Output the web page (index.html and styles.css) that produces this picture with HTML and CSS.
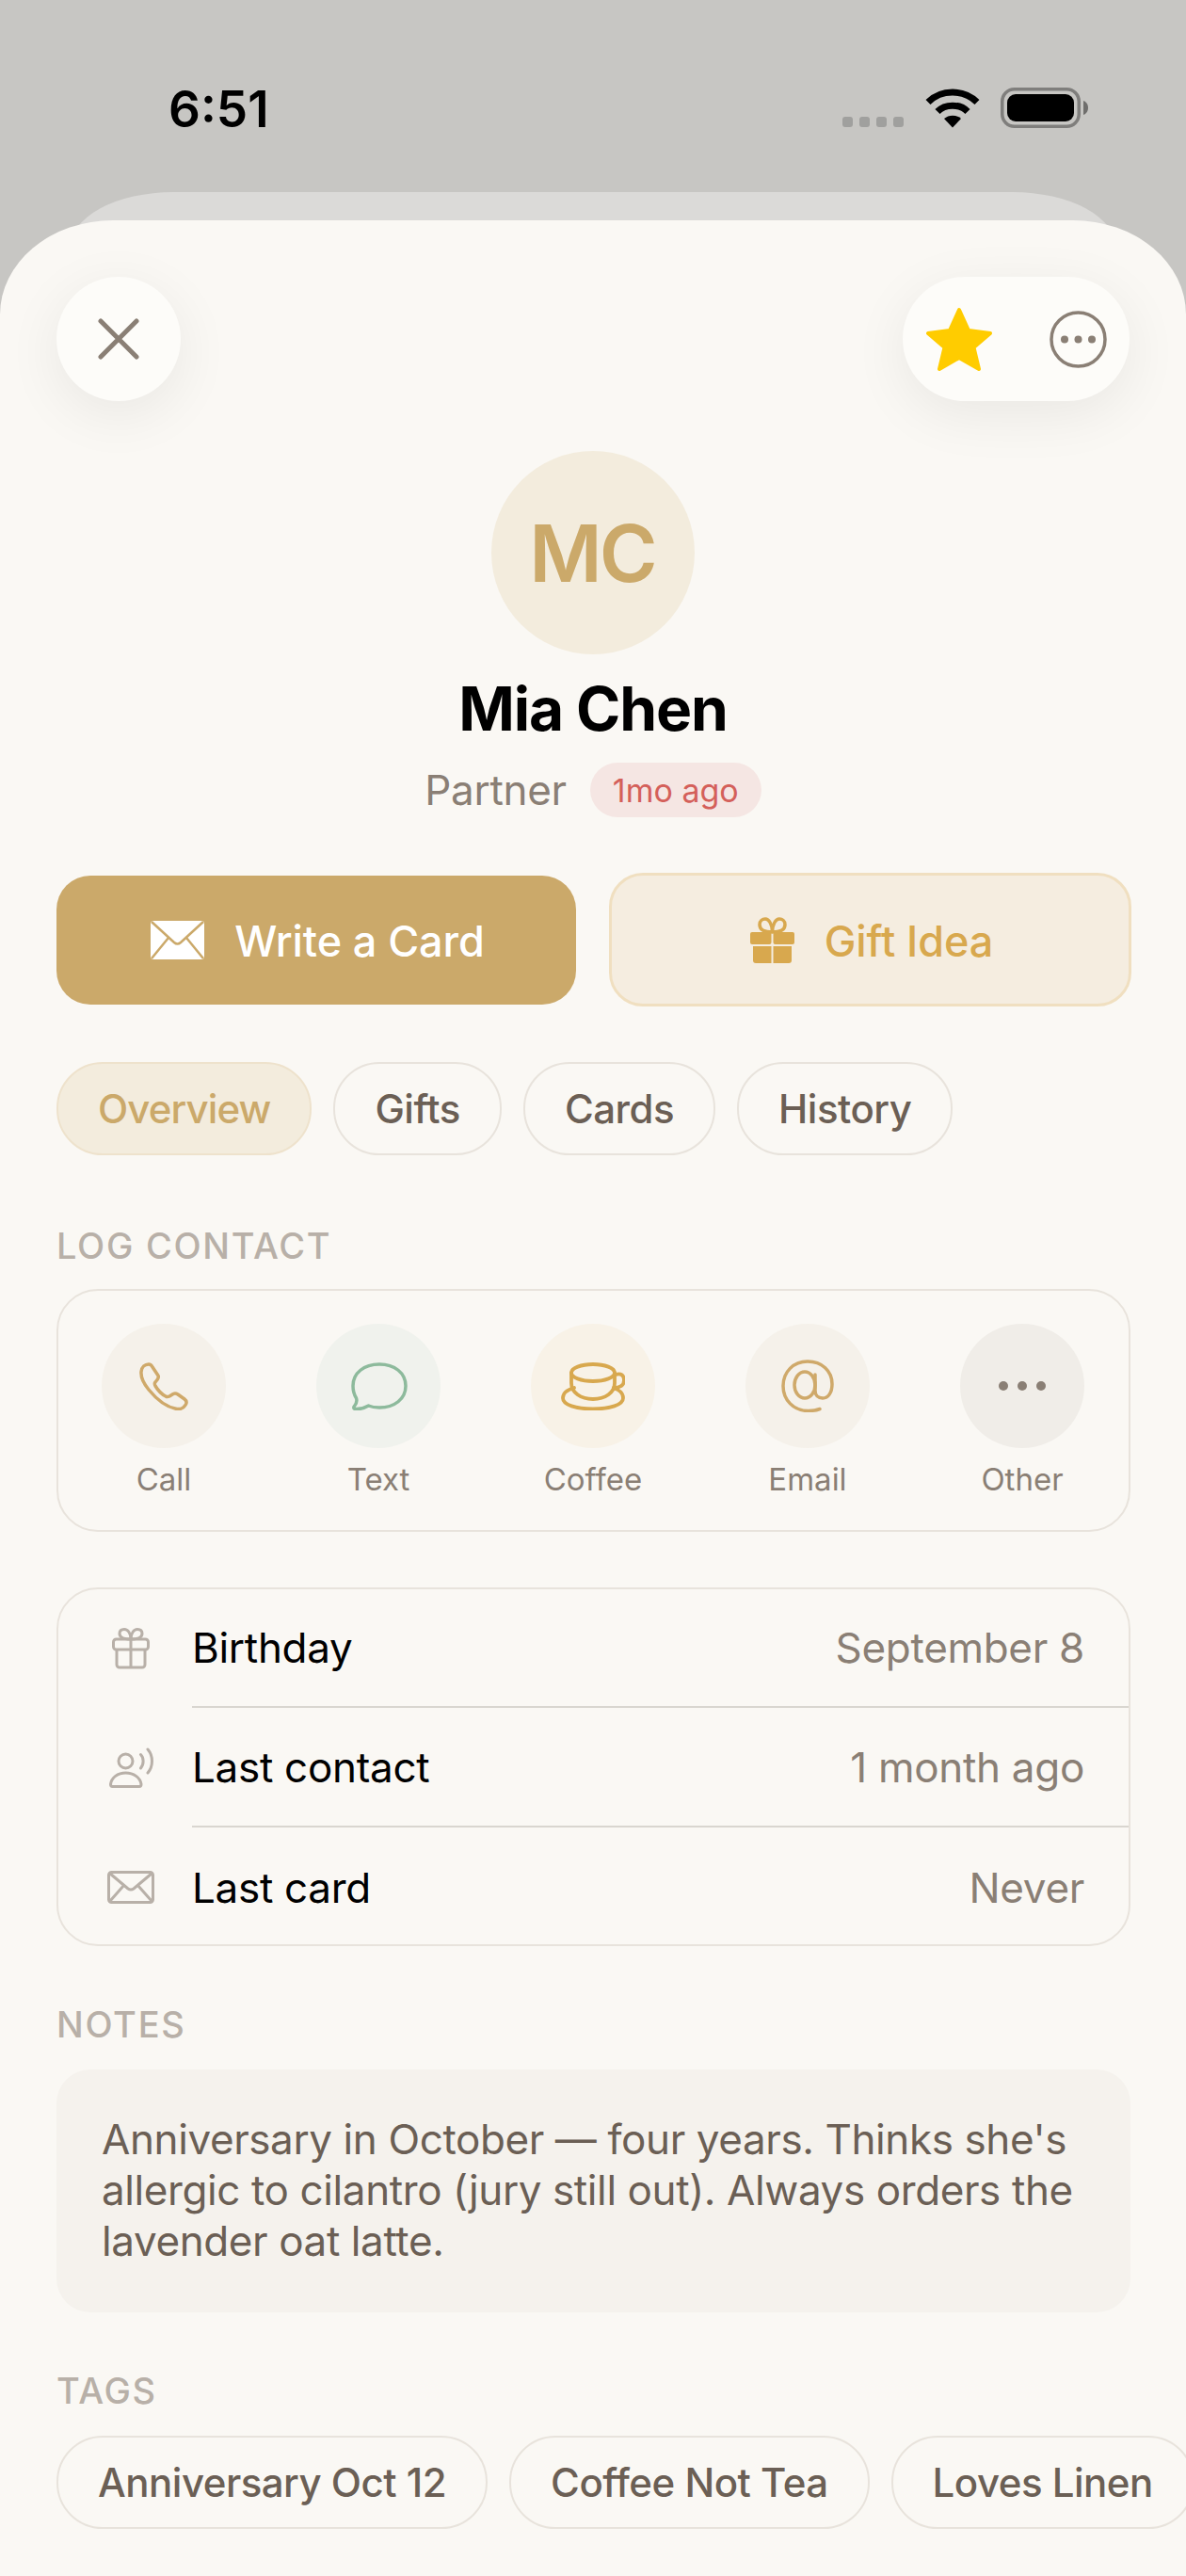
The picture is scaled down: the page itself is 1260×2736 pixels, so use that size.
FILE: index.html
```html
<!DOCTYPE html>
<html lang="en">
<head>
    <meta charset="UTF-8">
    <meta name="viewport" content="width=device-width, initial-scale=1.0">
    <title>Mia Chen</title>
    <link rel="stylesheet" href="styles.css">
</head>
<body>
    <div class="status-bar">
        <div class="time">6:51</div>
        <div class="status-icons">
            <div class="signal"><span></span><span></span><span></span><span></span></div>
            <svg class="wifi" width="58" height="43" viewBox="0 0 58 43">
                <path d="M3 15.500C17 1.500 41 1.500 55 15.500M13 25.500C21 17 37 17 45 25.500" fill="none" stroke="#000" stroke-width="7"/>
                <path d="M20 33C25 28.500 33 28.500 38 33L29 42.500Z" fill="#000"/>
            </svg>
            <svg class="battery" width="93" height="43" viewBox="0 0 93 43">
                <rect x="1.750" y="1.750" width="81.500" height="39.500" rx="13" fill="none" stroke="#7f7e7c" stroke-width="3.500"/>
                <rect x="7" y="7" width="71" height="29" rx="9" fill="#000"/>
                <path d="M88 14C91 15 93 18 93 21.500C93 25 91 28 88 29Z" fill="#6f6e6c"/>
            </svg>
        </div>
    </div>

    <div class="sheet-behind"></div>

    <div class="sheet">
        <div class="top-bar">
            <button class="close-btn">
                <svg width="44" height="44" viewBox="0 0 44 44">
                    <path d="M3 3L41 41M41 3L3 41" fill="none" stroke="#8a7f75" stroke-width="5" stroke-linecap="round"/>
                </svg>
            </button>
            <div class="top-actions">
                <svg width="72" height="69" viewBox="0 0 72 69">
                    <path d="M36 3L46 25L69 28L51.500 43L57 66L36 54L15 66L20.500 43L3 28L26 25Z" fill="#ffcc00" stroke="#ffcc00" stroke-width="4" stroke-linejoin="round"/>
                </svg>
                <svg width="61" height="61" viewBox="0 0 61 61">
                    <circle cx="30.500" cy="30.500" r="28.500" fill="none" stroke="#8a7f75" stroke-width="3.500"/>
                    <circle cx="16" cy="30.500" r="4" fill="#8a7f75"/>
                    <circle cx="30.500" cy="30.500" r="4" fill="#8a7f75"/>
                    <circle cx="45" cy="30.500" r="4" fill="#8a7f75"/>
                </svg>
            </div>
        </div>

        <div class="profile">
            <div class="avatar">MC</div>
            <h1 class="name">Mia Chen</h1>
            <div class="relation">
                <span>Partner</span>
                <span class="overdue">1mo ago</span>
            </div>
        </div>

        <div class="actions">
            <div class="btn btn-primary">
                <svg width="57" height="41" viewBox="0 0 57 41">
                    <rect width="57" height="41" rx="3" fill="#fff"/>
                    <path d="M1 1L25 23Q28.500 26 32 23L56 1M1 40L19 18M56 40L38 18" fill="none" stroke="#cba96a" stroke-width="2.500"/>
                </svg>
                <span>Write a Card</span>
            </div>
            <div class="btn btn-soft">
                <svg width="47" height="49" viewBox="0 0 47 49">
                    <path d="M23.500 16C17 16 10 15 10 8C10 4 13 2 16 2C20 2 23.500 8 23.500 16C23.500 8 27 2 31 2C34 2 37 4 37 8C37 15 30 16 23.500 16Z" fill="none" stroke="#d8a84e" stroke-width="3.500"/>
                    <rect y="16" width="22.500" height="13" rx="2" fill="#d8a84e"/>
                    <rect x="24.500" y="16" width="22.500" height="13" rx="2" fill="#d8a84e"/>
                    <path d="M3 31H22.500V49H6Q3 49 3 46ZM24.500 31H44V46Q44 49 41 49H24.500Z" fill="#d8a84e"/>
                </svg>
                <span>Gift Idea</span>
            </div>
        </div>

        <div class="tabs">
            <div class="tab active">Overview</div>
            <div class="tab">Gifts</div>
            <div class="tab">Cards</div>
            <div class="tab">History</div>
        </div>

        <div class="section-label log-label">LOG CONTACT</div>
        <div class="card log-card">
            <div class="log-item">
                <div class="log-circle call">
                    <svg width="52" height="51" viewBox="0 0 52 51">
                        <path d="M10 2C12 2 13 3 14 5L20 14C21 16 20 17 19 18.500L17 21C16 22 16 23 17 25C20 30 24 34 28 36C29.500 37 31 36.500 32 36L36 33.500C38 32.500 39.500 33 41 34L48 39C50 40.500 50.500 42.500 49.500 44.500C47.500 48 44 50 40 49.500C30 48 19 40 10 29C5 23 1.500 16 2 10C2.500 5 6 2 10 2Z" fill="none" stroke="#cfa96a" stroke-width="3.500" stroke-linejoin="round"/>
                    </svg>
                </div>
                <span>Call</span>
            </div>
            <div class="log-item">
                <div class="log-circle text">
                    <svg width="61" height="51" viewBox="0 0 61 51">
                        <path d="M31 2C47 2 59 11 59 25C59 39 47 48 31 48C27 48 23 47.500 19.500 46C16 48 10 50 5 49.500C3.500 49 3.500 47.500 4.500 46.500C6.500 44 7.500 41 6.500 38C4 34 3 30 3 25C3 11 15 2 31 2Z" fill="none" stroke="#8dba9c" stroke-width="3.500" stroke-linejoin="round"/>
                    </svg>
                </div>
                <span>Text</span>
            </div>
            <div class="log-item">
                <div class="log-circle coffee">
                    <svg width="68" height="51" viewBox="0 0 68 51">
                        <g fill="none" stroke="#d8a84e" stroke-width="3.800" stroke-linecap="round">
                            <ellipse cx="34" cy="11" rx="23" ry="9"/>
                            <path d="M11 11V22C11 32 21 39 34 39C47 39 57 32 57 22V11"/>
                            <path d="M58 13C64 11 67 14 67 19C67 24 63 27 56 27"/>
                            <path d="M14 27C7 29 2 33 2 38C2 45 16 49.500 34 49.500C52 49.500 66 45 66 38C66 33 62 29 56 27.500"/>
                        </g>
                    </svg>
                </div>
                <span>Coffee</span>
            </div>
            <div class="log-item">
                <div class="log-circle email">
                    <svg width="56" height="56" viewBox="0 0 56 56">
                        <g fill="none" stroke="#cfa96a" stroke-width="3.500" stroke-linecap="round">
                            <path d="M41 52.500C37 54 33 54.500 29 54.500C13 54.500 2 43 2 28C2 13 13 2 28 2C43 2 54 12 54 26C54 35 50 41 44 41C39 41 36 38 36 33V16"/>
                            <ellipse cx="25" cy="27" rx="11" ry="14"/>
                        </g>
                    </svg>
                </div>
                <span>Email</span>
            </div>
            <div class="log-item">
                <div class="log-circle other">
                    <svg width="50" height="12" viewBox="0 0 50 12">
                        <circle cx="5" cy="6" r="5" fill="#8a7f75"/>
                        <circle cx="25" cy="6" r="5" fill="#8a7f75"/>
                        <circle cx="45" cy="6" r="5" fill="#8a7f75"/>
                    </svg>
                </div>
                <span>Other</span>
            </div>
        </div>

        <div class="card info-card">
            <div class="info-row">
                <div class="info-icon">
                    <svg width="40" height="44" viewBox="0 0 40 44">
                        <g fill="none" stroke="#b8b0a8" stroke-width="3">
                            <rect x="1.500" y="12" width="37" height="11" rx="3"/>
                            <path d="M5 23V39A3 3 0 0 0 8 42H32A3 3 0 0 0 35 39V23M20 12V42"/>
                            <path d="M20 12C14 12 8 11 8 6C8 3 10 1.500 13 1.500C17 1.500 20 6 20 12C20 6 23 1.500 27 1.500C30 1.500 32 3 32 6C32 11 26 12 20 12Z"/>
                        </g>
                    </svg>
                </div>
                <div class="info-body"><span>Birthday</span><span class="info-value">September 8</span></div>
            </div>
            <div class="info-row">
                <div class="info-icon">
                    <svg width="47" height="43" viewBox="0 0 47 43">
                        <g fill="none" stroke="#b8b0a8" stroke-width="3" stroke-linecap="round">
                            <circle cx="17.500" cy="14.500" r="7.500"/>
                            <path d="M1.500 39C2.500 32 9 27 17.500 27C26 27 33 32 34 39C34 40.500 33.500 41.500 32 41.500H3.500C2 41.500 1.500 40.500 1.500 39Z"/>
                            <path d="M33.500 7.500C37 11 37 18 33.500 22M41 2C47 9 47 20 41 27"/>
                        </g>
                    </svg>
                </div>
                <div class="info-body"><span>Last contact</span><span class="info-value">1 month ago</span></div>
            </div>
            <div class="info-row">
                <div class="info-icon">
                    <svg width="50" height="35" viewBox="0 0 50 35">
                        <g fill="none" stroke="#b8b0a8" stroke-width="3">
                            <rect x="1.500" y="1.500" width="47" height="32" rx="3"/>
                            <path d="M3 3L22 19Q25 21 28 19L47 3M3 32L18 15M47 32L32 15"/>
                        </g>
                    </svg>
                </div>
                <div class="info-body"><span>Last card</span><span class="info-value">Never</span></div>
            </div>
        </div>

        <div class="section-label">NOTES</div>
        <div class="notes">Anniversary in October — four years. Thinks she's allergic to cilantro (jury still out). Always orders the lavender oat latte.</div>

        <div class="section-label">TAGS</div>
        <div class="tags">
            <div class="tab">Anniversary Oct 12</div>
            <div class="tab">Coffee Not Tea</div>
            <div class="tab">Loves Linen</div>
        </div>
    </div>
</body>
</html>
```

FILE: styles.css
```css
* {
    box-sizing: border-box;
}

body {
    margin: 0;
    height: 2736px;
    overflow: hidden;
    display: flex;
    flex-direction: column;
    font-family: Inter, "Liberation Sans", sans-serif;
    background-color: #c7c6c3;
}

.status-bar {
    height: 204px;
    flex-shrink: 0;
    display: flex;
    justify-content: space-between;
    align-items: flex-start;
    padding: 85px 104px 0 179px;
}

.time {
    font-size: 53px;
    line-height: 62px;
    font-weight: 600;
    color: #000;
}

.status-icons {
    display: flex;
    align-items: flex-end;
    margin-top: 8px;
}

.signal {
    display: flex;
    gap: 7px;
    margin-right: 23px;
    margin-bottom: 1px;
}

.signal span {
    width: 11px;
    height: 11px;
    border-radius: 3px;
    background-color: #a0a09e;
}

.battery {
    margin-left: 22px;
}

.sheet-behind {
    height: 70px;
    flex-shrink: 0;
    margin: 0 74px -40px;
    background-color: #dbdad8;
    border-radius: 110px 110px 0 0 / 60px 60px 0 0;
}

.sheet {
    flex: 1;
    position: relative;
    padding: 60px 59px 0 60px;
    background-color: #faf8f4;
    border-radius: 120px 120px 0 0 / 100px 100px 0 0;
}

.top-bar {
    display: flex;
    justify-content: space-between;
}

.close-btn {
    width: 132px;
    height: 132px;
    padding: 0;
    border: none;
    border-radius: 50%;
    display: flex;
    align-items: center;
    justify-content: center;
    background-color: #fdfcf9;
    box-shadow: 0 14px 60px rgba(0, 0, 0, 0.07);
}

.top-actions {
    width: 241px;
    height: 132px;
    margin-right: 1px;
    padding: 0 24px;
    border-radius: 66px;
    display: flex;
    align-items: center;
    justify-content: space-between;
    background-color: #fdfcf9;
    box-shadow: 0 14px 60px rgba(0, 0, 0, 0.07);
}

.profile {
    display: flex;
    flex-direction: column;
    align-items: center;
    margin-top: 53px;
    margin-right: 1px;
}

.avatar {
    width: 216px;
    height: 216px;
    padding-right: 2px;
    border-radius: 50%;
    display: flex;
    align-items: center;
    justify-content: center;
    font-size: 84px;
    font-weight: 600;
    letter-spacing: -3px;
    color: #cba96a;
    background-color: #f3ecdd;
}

.name {
    margin: 19px 0 0;
    font-size: 64px;
    line-height: 78px;
    font-weight: 700;
    letter-spacing: -1.100px;
    color: #000;
}

.relation {
    display: flex;
    align-items: center;
    gap: 25px;
    margin-top: 18px;
    font-size: 44px;
    letter-spacing: -0.300px;
    color: #8a7f75;
}

.overdue {
    height: 58px;
    padding: 0 24px;
    border-radius: 29px;
    display: flex;
    align-items: center;
    font-size: 34px;
    letter-spacing: 0;
    color: #d4605a;
    background-color: #f5e6e3;
}

.actions {
    display: grid;
    grid-template-columns: 552px 555px;
    gap: 35px;
    align-items: center;
    margin-top: 59px;
}

.btn {
    padding-left: 3px;
    display: flex;
    align-items: center;
    justify-content: center;
    gap: 32px;
    font-size: 45px;
    font-weight: 500;
    letter-spacing: -0.100px;
}

.btn span {
    padding-top: 2px;
}

.btn-primary {
    height: 137px;
    border-radius: 36px;
    color: #fff;
    background-color: #cba96a;
}

.btn-soft {
    height: 142px;
    border: 3px solid #f0dfc0;
    border-radius: 36px;
    color: #d8a84e;
    background-color: #f5ede0;
}

.tabs,
.tags {
    display: flex;
    gap: 23px;
}

.tabs {
    margin-top: 59px;
}

.tags {
    margin-right: -59px;
    overflow: hidden;
}

.tab {
    height: 99px;
    flex-shrink: 0;
    padding: 0 42px;
    display: flex;
    align-items: center;
    border: 2px solid #e8e3dc;
    border-radius: 49px;
    font-size: 42px;
    font-weight: 500;
    letter-spacing: -0.500px;
    color: #6b5f55;
}

.tab.active {
    letter-spacing: -0.900px;
    color: #cba96a;
    border-color: #eee2cc;
    background-color: #f3ecdd;
}

.section-label {
    height: 46px;
    margin-top: 60px;
    margin-bottom: 25px;
    line-height: 46px;
    font-size: 38px;
    font-weight: 500;
    letter-spacing: 1.700px;
    color: #b8b0a8;
}

.log-label {
    margin-top: 73px;
    margin-bottom: 23px;
}

.card {
    border: 2px solid #e8e3dc;
    border-radius: 44px;
}

.log-card {
    display: flex;
    justify-content: space-between;
    padding: 35px 47px 0 46px;
    height: 258px;
}

.log-item {
    width: 132px;
    display: flex;
    flex-direction: column;
    align-items: center;
    gap: 14px;
    font-size: 33px;
    line-height: 38px;
    color: #8a7f75;
}

.log-circle {
    width: 132px;
    height: 132px;
    border-radius: 50%;
    display: flex;
    align-items: center;
    justify-content: center;
}

.call,
.email {
    background-color: #f5f1ea;
}

.text {
    background-color: #f0f2ed;
}

.coffee {
    background-color: #f8f2e7;
}

.other {
    background-color: #f0ede8;
}

.info-card {
    height: 381px;
    margin-top: 59px;
}

.info-row {
    height: 127px;
    display: flex;
}

.info-row:first-child {
    height: 126px;
}

.info-icon {
    width: 142px;
    display: flex;
    align-items: center;
    justify-content: center;
    padding-left: 12px;
}

.info-body {
    flex: 1;
    display: flex;
    align-items: center;
    justify-content: space-between;
    padding-right: 47px;
    border-bottom: 2px solid #d9d6d0;
    font-size: 44px;
    letter-spacing: -0.300px;
    color: #000;
}

.info-row:last-child .info-body {
    border-bottom: none;
}

.info-value {
    color: #8a7f75;
}

.notes {
    height: 258px;
    padding: 47px 48px;
    border-radius: 36px;
    font-size: 44px;
    line-height: 54px;
    letter-spacing: -0.400px;
    color: #6b5f55;
    background-color: #f5f2ed;
}
```
